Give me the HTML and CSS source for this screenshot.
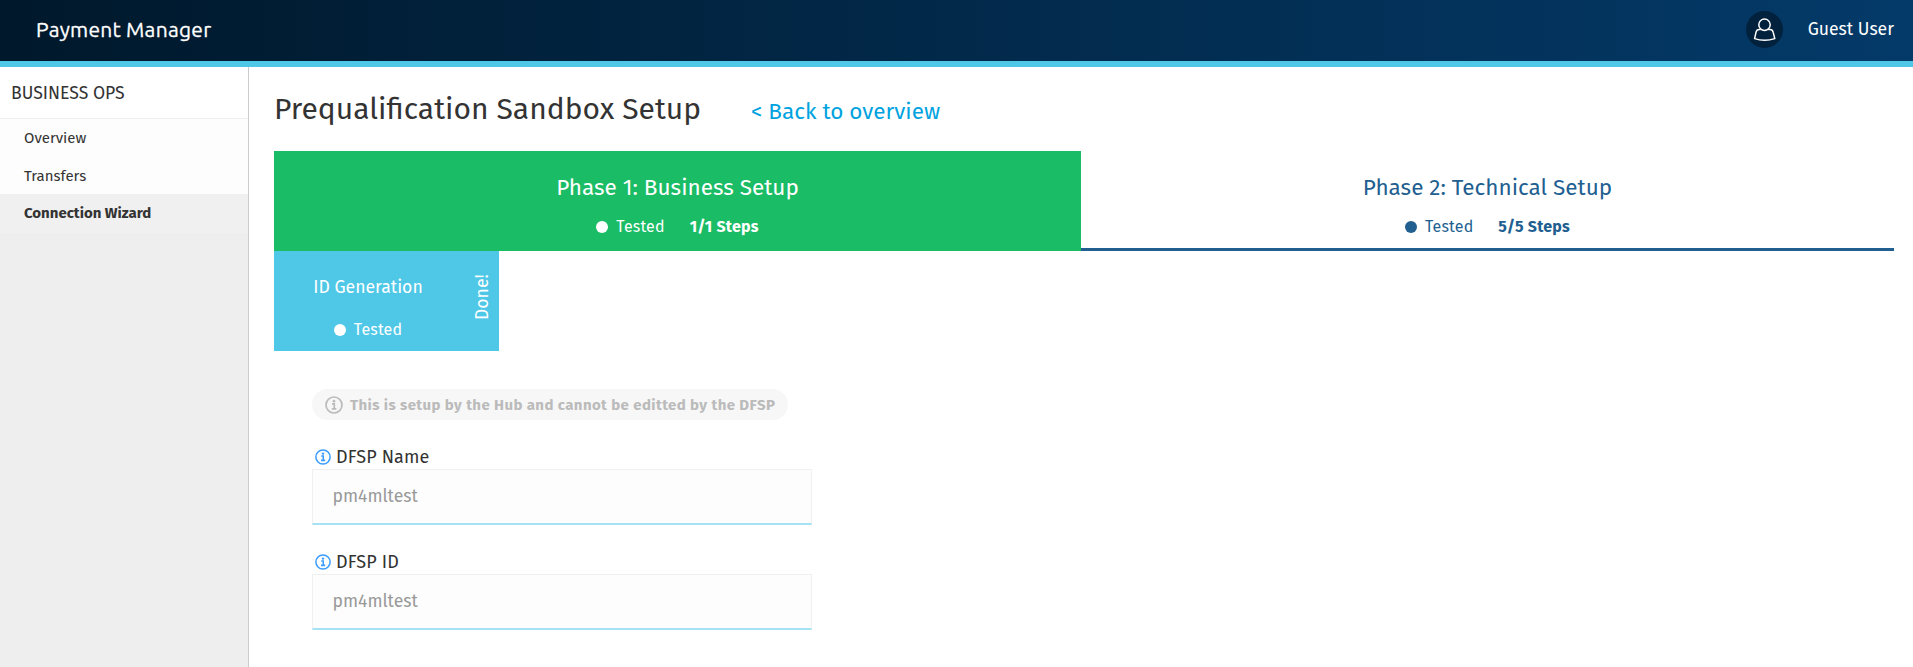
FILE: index.html
```html
<!DOCTYPE html>
<html lang="en">
<head>
<meta charset="utf-8">
<title>Payment Manager</title>
<link rel="stylesheet" href="styles.css">
</head>
<body>
<svg width="0" height="0" class="sprite">
  <symbol id="info" viewBox="0 0 18 18">
    <circle cx="9" cy="9" r="8" fill="none" stroke="currentColor" stroke-width="1.7"/>
    <circle cx="9" cy="5.2" r="1.35" fill="currentColor"/>
    <path d="M7 7.9H9.3V12.6M6.8 12.8H11.4" fill="none" stroke="currentColor" stroke-width="1.7"/>
  </symbol>
</svg>
<header class="topbar">
  <div class="brand">Payment Manager</div>
  <div class="user">
    <span class="avatar">
      <svg width="37" height="37" viewBox="0 0 37 37" fill="none" stroke="#fff" stroke-width="1.5" stroke-linejoin="round">
        <circle cx="18.5" cy="13.7" r="5.7"/>
        <path d="M14.8 18.6H13.2C11.3 18.6 10.4 19.6 10 21.4L8.6 27.6Q18.5 31 28.8 27.6L27.2 21.4C26.8 19.6 25.9 18.6 24 18.6H22.2"/>
      </svg>
    </span>
    <span class="user-name">Guest User</span>
  </div>
</header>
<div class="layout">
  <nav class="sidebar">
    <div class="section">BUSINESS OPS</div>
    <a class="item">Overview</a>
    <a class="item">Transfers</a>
    <a class="item active">Connection Wizard</a>
  </nav>
  <main class="content">
    <div class="heading">
      <h1>Prequalification Sandbox Setup</h1>
      <a class="back">&lt; Back to overview</a>
    </div>
    <div class="phases">
      <div class="phase current">
        <div class="phase-title">Phase 1: Business Setup</div>
        <div class="status"><i class="dot"></i><span>Tested</span><b>1/1 Steps</b></div>
      </div>
      <div class="phase">
        <div class="phase-title">Phase 2: Technical Setup</div>
        <div class="status"><i class="dot"></i><span>Tested</span><b>5/5 Steps</b></div>
      </div>
    </div>
    <div class="step">
      <div class="step-main">
        <div class="step-title">ID Generation</div>
        <div class="status"><i class="dot"></i><span>Tested</span></div>
      </div>
      <div class="done">Done!</div>
    </div>
    <section class="form">
      <div class="notice"><svg width="18" height="18"><use href="#info"/></svg><span>This is setup by the Hub and cannot be editted by the DFSP</span></div>
      <div class="field">
        <label><svg width="16" height="16"><use href="#info"/></svg><span>DFSP Name</span></label>
        <div class="input">pm4mltest</div>
      </div>
      <div class="field">
        <label><svg width="16" height="16"><use href="#info"/></svg><span>DFSP ID</span></label>
        <div class="input">pm4mltest</div>
      </div>
    </section>
  </main>
</div>
</body>
</html>
```
FILE: styles.css
```css
* { box-sizing: border-box; }
body {
  margin: 0;
  height: 667px;
  display: flex;
  flex-direction: column;
  overflow: hidden;
  background: #fff;
  color: #333;
  font-family: "Fira Sans", "Noto Sans", sans-serif;
  font-size: 17.6px;
}
.sprite { display: none; }
svg { display: block; flex: none; }

.topbar {
  height: 67px;
  flex: none;
  display: flex;
  justify-content: space-between;
  padding: 0 19px 0 36px;
  border-bottom: 6px solid #4fc7e7;
  background: linear-gradient(90deg, #00182b, #043a69) border-box;
  color: #fff;
}
.brand {
  line-height: 58px;
  font-family: Ubuntu, "Fira Sans", "Noto Sans", sans-serif;
  font-size: 21px;
  letter-spacing: 0.26px;
  -webkit-text-stroke: 0.3px #fff;
}
.user { display: flex; gap: 25px; }
.avatar { width: 37px; height: 37px; margin-top: 11px; border-radius: 50%; background: #02213c; }
.user-name { line-height: 60px; }

.layout { flex: 1; display: flex; }
.sidebar { width: 249px; flex: none; background: #eee; border-right: 1px solid #ccc; }
.section {
  height: 52px;
  padding-left: 11px;
  line-height: 54px;
  background: #fff;
  border-bottom: 1px solid #eee;
}
.item {
  display: block;
  height: 37.5px;
  padding-left: 24px;
  line-height: 38.5px;
  font-size: 15px;
  background: #fdfdfd;
}
.active { height: 39px; font-weight: 700; background: #f0f0f0; }

.content { flex: 1; padding: 22px 19px 0 25px; }
.heading { height: 62px; display: flex; align-items: baseline; gap: 50px; line-height: 40px; }
h1 { margin: 0; font-size: 30px; font-weight: 400; }
.back { color: #00a3e0; font-size: 22.5px; }

.phases { display: flex; }
.phase {
  width: 813px;
  height: 100px;
  padding-top: 22px;
  display: flex;
  flex-direction: column;
  align-items: center;
  gap: 12px;
  color: #225f91;
  border-bottom: 3px solid #225f91;
}
.phase.current { width: 807px; color: #fff; background: #1abc65; border: 0; }
.phase-title { line-height: 30px; font-size: 22.5px; }
.status { display: flex; align-items: center; line-height: 24px; font-size: 16px; letter-spacing: 0.15px; }
.dot { width: 12px; height: 12px; margin: 0 8px 1px 0; border-radius: 50%; background: currentColor; }
.status b { margin-left: 25px; letter-spacing: 0.2px; }

.step { width: 225px; height: 100px; display: flex; background: #4fc7e7; color: #fff; }
.step-main {
  width: 188px;
  padding-top: 24px;
  display: flex;
  flex-direction: column;
  align-items: center;
  gap: 17px;
}
.step-title { line-height: 26px; }
.done {
  width: 37px;
  height: 92px;
  line-height: 41px;
  writing-mode: vertical-rl;
  transform: rotate(180deg);
  text-align: center;
}

.form { width: 500px; margin: 38px 0 0 38px; display: flex; flex-direction: column; align-items: flex-start; gap: 24px; }
.notice {
  width: 476px;
  height: 31px;
  padding-left: 13px;
  display: flex;
  align-items: center;
  gap: 7px;
  border-radius: 16px;
  background: #f7f7f7;
  color: #bbb;
  font-size: 15px;
  font-weight: 700;
  letter-spacing: 0.4px;
  white-space: nowrap;
}
.field { width: 500px; }
label { height: 25px; padding-left: 3px; display: flex; align-items: center; gap: 5px; line-height: 26px; font-size: 18px; letter-spacing: 0.12px; }
label svg { color: #3b9cff; }
.input {
  height: 56px;
  padding-left: 19.5px;
  line-height: 53px;
  color: #999;
  background: #fdfdfd;
  border: 1px solid #f0f0f0;
  border-bottom: 2px solid #a5e2f3;
}
```
